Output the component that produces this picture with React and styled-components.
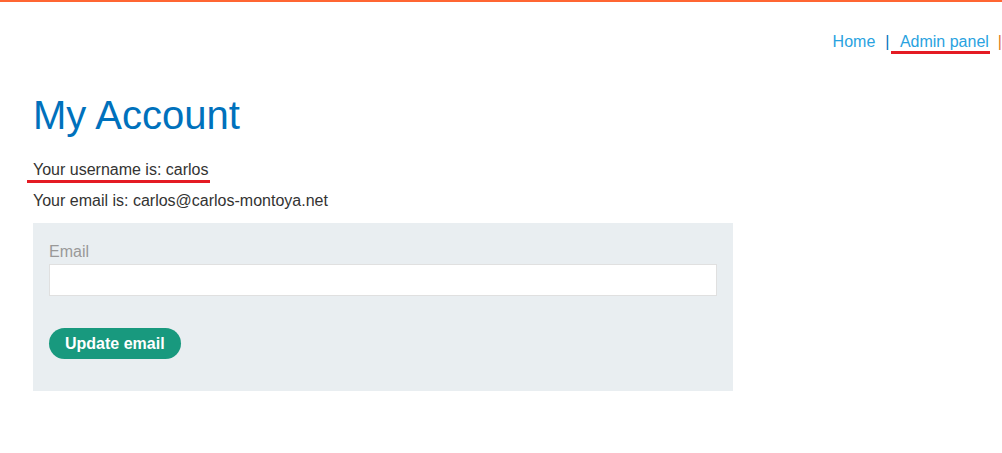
import styled, { createGlobalStyle } from "styled-components";

const GlobalStyle = createGlobalStyle`
  html, body {
    margin: 0;
    padding: 0;
    background: #fff;
  }
  body {
    font-family: "Liberation Sans", Arial, sans-serif;
    font-size: 16px;
    color: #333332;
  }
`;

export default function App() {
  return (
    <>
      <GlobalStyle />
      <Page>
        <TopBar />
        <Header>
          <NavLink>Home</NavLink>
          <Pipe>|</Pipe>
          <NavLink $marked>&nbsp;Admin panel</NavLink>
          <Pipe $orange>|</Pipe>
        </Header>
        <Main>
          <Title>My Account</Title>
          <Info>
            <Line $marked>Your username is: carlos</Line>
          </Info>
          <Info>
            <Line>Your email is: carlos@carlos-montoya.net</Line>
          </Info>
          <Form>
            <Label>Email</Label>
            <Input type="email" />
            <Button type="button">Update email</Button>
          </Form>
        </Main>
      </Page>
    </>
  );
}

const Page = styled.div`
  display: flex;
  flex-direction: column;
  width: 100%;
  min-height: 453px;
  overflow: hidden;
`;

const TopBar = styled.div`
  height: 2px;
  background: #ff6633;
`;

const Header = styled.nav`
  display: flex;
  justify-content: flex-end;
  align-items: baseline;
  padding: 31px 0 0;
  line-height: 18px;
`;

const NavLink = styled.a`
  position: relative;
  color: #29a2e0;
  text-decoration: none;
  cursor: pointer;

  ${({ $marked }) =>
    $marked &&
    `
    padding-left: 4px;
    &::after {
      content: "";
      position: absolute;
      left: 0;
      right: -1px;
      bottom: -3px;
      height: 3px;
      background: #e41b23;
    }
  `}
`;

const Pipe = styled.span`
  color: ${({ $orange }) => ($orange ? "#e07a1f" : "#0071bc")};
  margin: ${({ $orange }) => ($orange ? "0 0 0 9px" : "0 2px 0 10px")};
`;

const Main = styled.main`
  display: flex;
  flex-direction: column;
  padding: 41px 0 0 33px;
`;

const Title = styled.h1`
  margin: 0 0 23px;
  font-size: 40px;
  font-weight: 400;
  line-height: 46px;
  color: #0071bc;
`;

const Info = styled.p`
  margin: 0 0 13px;
  line-height: 18px;
`;

const Line = styled.span`
  position: relative;
  ${({ $marked }) =>
    $marked &&
    `
    &::after {
      content: "";
      position: absolute;
      left: -6px;
      right: -1px;
      bottom: -5px;
      height: 3px;
      background: #e41b23;
    }
  `}
`;

const Form = styled.form`
  display: flex;
  flex-direction: column;
  align-items: flex-start;
  box-sizing: border-box;
  width: 700px;
  padding: 20px 16px 32px;
  background: #e9eef1;
`;

const Label = styled.label`
  color: #999;
  line-height: 18px;
  margin-bottom: 3px;
`;

const Input = styled.input`
  box-sizing: border-box;
  width: 100%;
  height: 32px;
  margin: 0 0 32px;
  border: 1px solid #e0e0e0;
  background: #fff;
  outline: none;
  font: inherit;
`;

const Button = styled.button`
  height: 31px;
  padding: 0 16px;
  border: none;
  border-radius: 16px;
  background: #18997e;
  color: #fff;
  font-family: "Liberation Sans", Arial, sans-serif;
  font-size: 16px;
  font-weight: 700;
  cursor: pointer;
`;
